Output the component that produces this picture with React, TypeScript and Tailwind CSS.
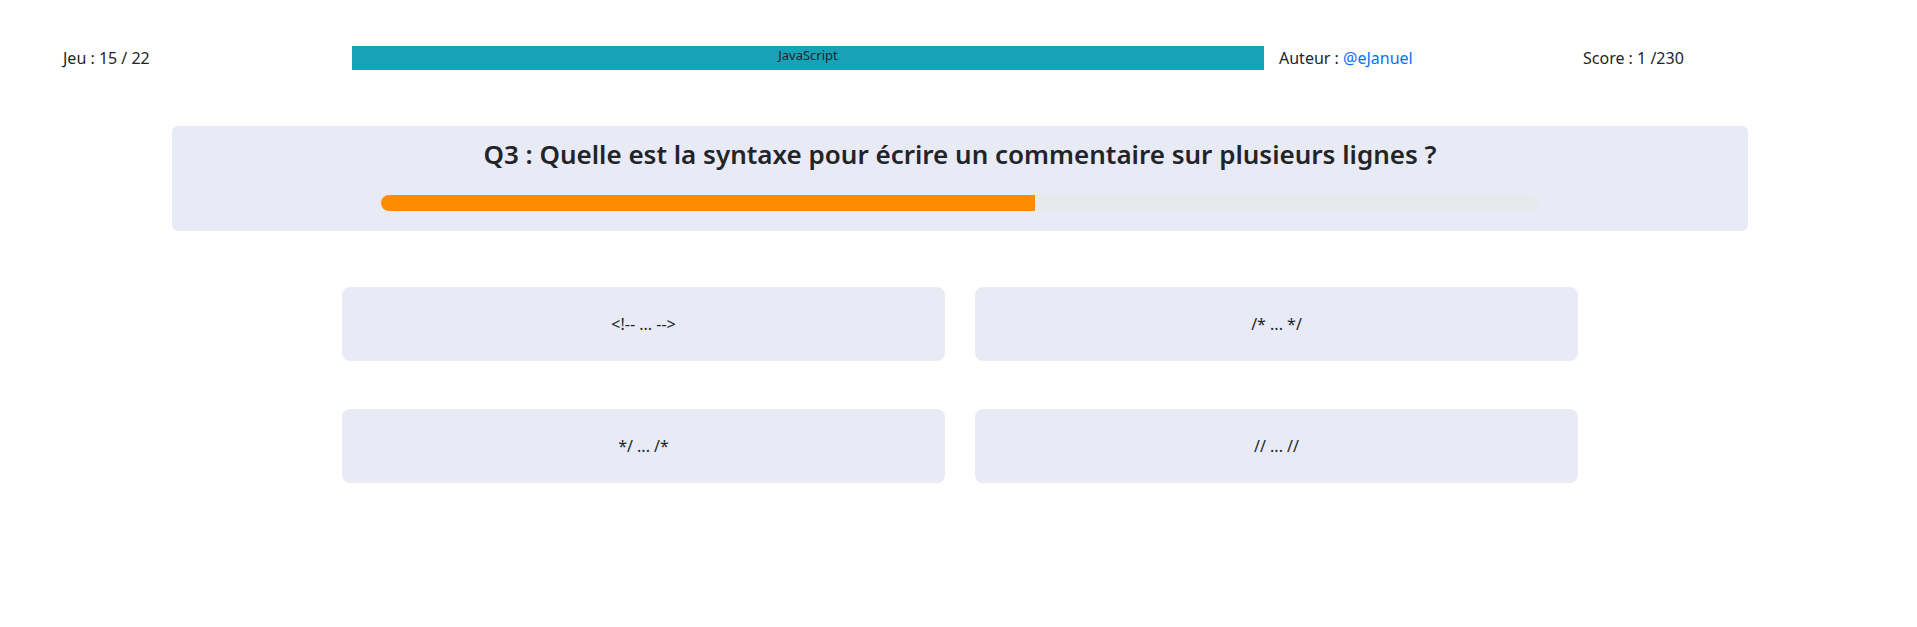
import { useState } from 'react';

type Answer = { id: string; label: string };

const ANSWERS: Answer[] = [
  { id: 'a', label: '<!-- ... -->' },
  { id: 'b', label: '/* ... */' },
  { id: 'c', label: '*/ ... /*' },
  { id: 'd', label: '// ... //' },
];

const FONT = "font-['Segoe_UI','Noto_Sans',sans-serif]";

function GameHeader() {
  return (
    <div className="flex items-center pt-[46px] pl-[45px] text-[16px] text-[#212529]">
      <div className="w-[304px] px-[15px]">Jeu : 15 / 22</div>
      <div className="w-[912px] h-[24px] bg-[#17a2b8] text-center text-[13px] leading-[19px] text-[#212529]">
        JavaScript
      </div>
      <div className="w-[304px] px-[15px]">
        Auteur : <a href="#" className="text-[#0d6efd]">@eJanuel</a>
      </div>
      <div className="w-[304px] px-[15px]">Score : 1 /230</div>
    </div>
  );
}

function QuestionCard({ progress }: { progress: number }) {
  return (
    <div className="w-[1576px] mx-auto mt-[56px] rounded-md bg-[#e8ebf5] pt-[13px] pb-[20px]">
      <h4 className="text-center text-[26px] leading-[31px] font-semibold text-[#212529]">
        Q3 : Quelle est la syntaxe pour écrire un commentaire sur plusieurs lignes ?
      </h4>
      <div className="w-[1158px] h-[16px] mx-auto mt-[25px] rounded-full bg-[#e7eaed] overflow-hidden">
        <div className="h-full bg-[#ff8c00]" style={{ width: `${progress}%` }} />
      </div>
    </div>
  );
}

export default function App() {
  const [picked, setPicked] = useState<string | null>(null);

  return (
    <div className={`min-h-screen bg-white pl-[3px] ${FONT}`}>
      <GameHeader />
      <QuestionCard progress={56.5} />
      <div className="w-[1236px] mx-auto mt-[56px] grid grid-cols-2 gap-x-[30px] gap-y-[48px]">
        {ANSWERS.map((a) => (
          <button
            key={a.id}
            type="button"
            onClick={() => setPicked(a.id)}
            className={`h-[74px] rounded-lg text-[16px] text-[#212529] cursor-pointer ${
              picked === a.id ? 'bg-[#dfe3f0]' : 'bg-[#e8ebf5]'
            }`}
          >
            {a.label}
          </button>
        ))}
      </div>
    </div>
  );
}
